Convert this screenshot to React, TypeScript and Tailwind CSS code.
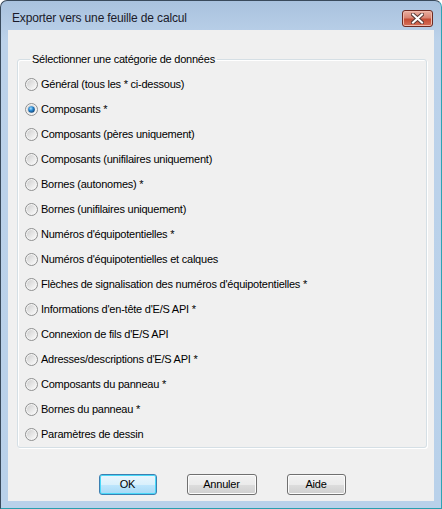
import React from "react";

const options = [
  "Général (tous les * ci-dessous)",
  "Composants *",
  "Composants (pères uniquement)",
  "Composants (unifilaires uniquement)",
  "Bornes (autonomes) *",
  "Bornes (unifilaires uniquement)",
  "Numéros d'équipotentielles *",
  "Numéros d'équipotentielles et calques",
  "Flèches de signalisation des numéros d'équipotentielles *",
  "Informations d'en-tête d'E/S API *",
  "Connexion de fils d'E/S API",
  "Adresses/descriptions d'E/S API *",
  "Composants du panneau *",
  "Bornes du panneau *",
  "Paramètres de dessin",
];

function Radio({ checked }: { checked: boolean }) {
  return (
    <svg width="13" height="13" viewBox="0 0 13 13" className="shrink-0">
      <defs>
        <linearGradient id="rInner" x1="0" y1="0" x2="1" y2="1">
          <stop offset="0%" stopColor="#cfcfcf" />
          <stop offset="100%" stopColor="#fbfbfb" />
        </linearGradient>
        <radialGradient id="rDot" cx="40%" cy="35%" r="70%">
          <stop offset="0%" stopColor="#a6e0ff" />
          <stop offset="45%" stopColor="#2a8ad4" />
          <stop offset="100%" stopColor="#0d3d6e" />
        </radialGradient>
      </defs>
      <circle cx="6.5" cy="6.5" r="6" fill="#f4f4f4" stroke="#8e8f8f" strokeWidth="1" />
      <circle cx="6.5" cy="6.5" r="4.5" fill="url(#rInner)" />
      {checked && <circle cx="6.5" cy="6.5" r="3.3" fill="url(#rDot)" />}
    </svg>
  );
}

function Button({
  label,
  width,
  isDefault,
}: {
  label: string;
  width: string;
  isDefault?: boolean;
}) {
  return (
    <button
      className={
        "h-[21px] rounded-[3px] border text-[11px] text-black tracking-[-0.2px] " +
        width +
        " " +
        (isDefault
          ? "border-[#3c7fb1] bg-[linear-gradient(#eaf6fd_0%,#d9f0fc_50%,#bee6fd_51%,#a7d9f5_100%)] shadow-[inset_0_0_0_1px_#48d8f8]"
          : "border-[#707070] bg-[linear-gradient(#f2f2f2_0%,#ebebeb_50%,#dddddd_51%,#cfcfcf_100%)] shadow-[inset_0_0_0_1px_#fcfcfc]")
      }
    >
      {label}
    </button>
  );
}

export default function App() {
  return (
    <div className="w-[442px] h-[509px] flex flex-col rounded-t-[7px] border border-[#394a5c] border-r-[#2fa3b4] border-b-[#2a9fae] bg-[linear-gradient(#a9c2de,#bcd2ea_40px,#b9d1ea)] font-['Liberation_Sans',Arial,sans-serif]">
      {/* title bar */}
      <div className="h-[29px] pt-[5px] pl-[11px] pr-[8px] flex items-center justify-between">
        <span className="text-[12px] text-[#1a1a2a] tracking-[-0.15px]">
          Exporter vers une feuille de calcul
        </span>
        <div className="w-[31px] h-[17px] rounded-[3px] border border-[#6d2a22] bg-[linear-gradient(#eab0a2_0%,#d98473_45%,#c44c34_55%,#d5705a_100%)] flex items-center justify-center shadow-[inset_0_0_0_1px_#f0b9ab]">
          <svg width="13" height="11" viewBox="0 0 13 11">
            <path d="M2 1.5 L11 9.5 M11 1.5 L2 9.5" stroke="#5a3a36" strokeWidth="4" strokeLinecap="square" />
            <path d="M2 1.5 L11 9.5 M11 1.5 L2 9.5" stroke="#ffffff" strokeWidth="2" strokeLinecap="square" />
          </svg>
        </div>
      </div>

      {/* client area */}
      <div className="flex-1 mx-[7px] mb-[7px] bg-[#f0f0f0] flex flex-col px-[9px] pt-[23px] text-[11px] text-black tracking-[-0.23px]">
        <fieldset className="rounded-[3px] border border-[#d5dfe5] shadow-[inset_1px_1px_0_#fff,1px_1px_0_#fff] pl-[7px] mr-[-2px]">
          <legend className="ml-[5px] px-[2px] leading-[13px]">
            Sélectionner une catégorie de données
          </legend>
          <div className="flex flex-col pt-[6px]">
            {options.map((o, i) => (
              <div key={o} className="h-[25px] flex items-center gap-[3px]">
                <Radio checked={i === 1} />
                <span>{o}</span>
              </div>
            ))}
          </div>
        </fieldset>

        <div className="flex justify-center gap-[30px] mt-[26px] pl-[2px]">
          <Button label="OK" width="w-[58px]" isDefault />
          <Button label="Annuler" width="w-[70px]" />
          <Button label="Aide" width="w-[59px]" />
        </div>
      </div>
    </div>
  );
}
